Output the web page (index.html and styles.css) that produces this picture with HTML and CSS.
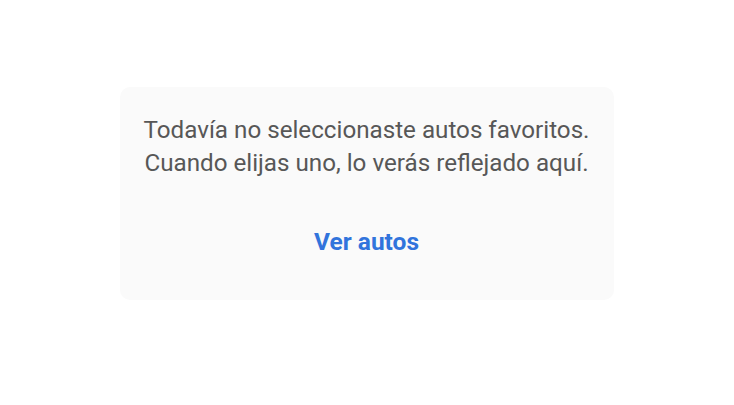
FILE: index.html
```html
<!DOCTYPE html>
<html lang="es">
<head>
<meta charset="utf-8">
<title>Favoritos</title>
<link rel="stylesheet" href="styles.css">
</head>
<body>
<main class="page">
  <section class="empty-card">
    <p class="empty-text">Todavía no seleccionaste autos favoritos.<br>Cuando elijas uno, lo verás reflejado aquí.</p>
    <a class="empty-link" href="#">Ver autos</a>
  </section>
</main>
</body>
</html>
```
FILE: styles.css
```css
html, body {
  margin: 0;
  padding: 0;
  background: #ffffff;
}
.page {
  display: flex;
  justify-content: center;
  padding-top: 87px;
  font-family: Roboto, "Liberation Sans", sans-serif;
}
.empty-card {
  box-sizing: border-box;
  width: 494px;
  height: 213px;
  margin-left: -1px;
  background: #fafafa;
  border-radius: 10px;
  display: flex;
  flex-direction: column;
  align-items: center;
  padding-top: 27px;
}
.empty-text {
  margin: 0;
  font-size: 24.2px;
  line-height: 33px;
  color: #575757;
  text-align: center;
}
.empty-link {
  margin-top: 48px;
  font-size: 24.5px;
  line-height: 28px;
  font-weight: 700;
  color: #3174dc;
  text-decoration: none;
}
```
